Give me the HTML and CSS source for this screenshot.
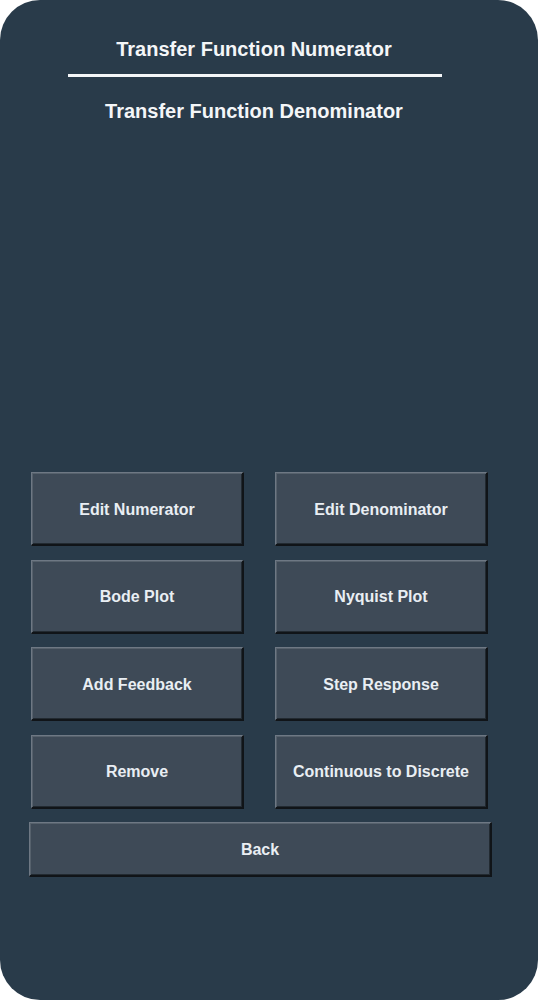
FILE: index.html
```html
<!DOCTYPE html>
<html>
<head>
<meta charset="utf-8">
<link rel="stylesheet" href="styles.css">
</head>
<body>
<div class="panel">
  <div class="header">
    <div class="title num">Transfer Function Numerator</div>
    <div class="divider"></div>
    <div class="title den">Transfer Function Denominator</div>
  </div>
  <div class="grid">
    <button class="btn">Edit Numerator</button>
    <button class="btn">Edit Denominator</button>
    <button class="btn">Bode Plot</button>
    <button class="btn">Nyquist Plot</button>
    <button class="btn">Add Feedback</button>
    <button class="btn">Step Response</button>
    <button class="btn">Remove</button>
    <button class="btn">Continuous to Discrete</button>
  </div>
  <button class="btn back">Back</button>
</div>
</body>
</html>
```

FILE: styles.css
```css
html, body {
  margin: 0;
  padding: 0;
  background: #ffffff;
}
.panel {
  width: 538px;
  height: 1000px;
  background: #293b4a;
  border-radius: 40px;
  display: flex;
  flex-direction: column;
  font-family: "Liberation Sans", Arial, sans-serif;
  box-sizing: border-box;
  padding-top: 37px;
}
.header {
  width: 508px;
  display: flex;
  flex-direction: column;
  align-items: center;
}
.title {
  color: #f4f6f8;
  font-weight: bold;
  font-size: 20px;
  line-height: 24px;
  text-align: center;
}
.divider {
  width: 374px;
  height: 3px;
  background: #f4f6f8;
  margin: 13px 0 22px 1px;
}
.grid {
  margin-top: 349px;
  margin-left: 31px;
  width: 457px;
  display: grid;
  grid-template-columns: 213px 213px;
  grid-auto-rows: 74px;
  column-gap: 31px;
  row-gap: 13.67px;
}
.btn {
  font-family: "Liberation Sans", Arial, sans-serif;
  font-weight: bold;
  font-size: 16px;
  color: #e9eef3;
  background: #3e4a57;
  border-style: solid;
  border-width: 1px 2px 2px 1px;
  border-color: #6e7884 #101418 #101418 #6e7884;
  box-shadow: inset 1px 1px 0 #56616c, inset -1px -1px 0 #222a31;
  padding: 2px 0 0 0;
  margin: 0;
  box-sizing: border-box;
}
.back {
  margin-top: 13px;
  margin-left: 29px;
  width: 463px;
  height: 55px;
  padding-top: 3px;
}
```
